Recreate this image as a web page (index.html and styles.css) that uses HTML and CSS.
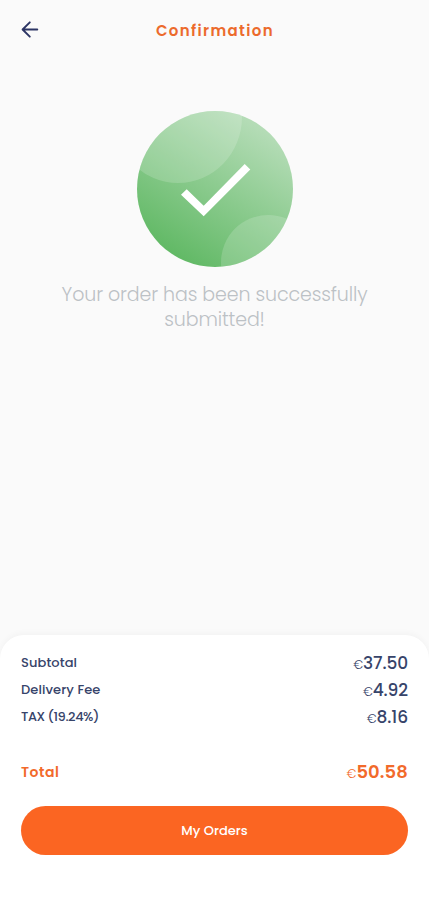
FILE: index.html
```html
<!DOCTYPE html>
<html lang="en">
<head>
<meta charset="utf-8">
<title>Confirmation</title>
<link rel="stylesheet" href="styles.css">
</head>
<body>
<main class="screen">
  <header class="header">
    <svg class="back" viewBox="0 0 20 20" aria-label="Back"><path d="M17.3 9.5H2.8M9.8 2.3L2.6 9.5l7.2 7.2"/></svg>
    <h1 class="title">Confirmation</h1>
  </header>
  <section class="status">
    <svg class="badge" viewBox="0 0 156 156">
      <defs>
        <linearGradient id="green" x1="0.3" y1="1" x2="0.85" y2="0.15">
          <stop offset="0" stop-color="#5fb863"/>
          <stop offset="1" stop-color="#b4dcb6"/>
        </linearGradient>
        <clipPath id="disc"><circle cx="78" cy="78" r="78"/></clipPath>
      </defs>
      <g clip-path="url(#disc)">
        <rect width="156" height="156" fill="url(#green)"/>
        <ellipse cx="41" cy="6" rx="64" ry="66" fill="#fff" fill-opacity=".17"/>
        <circle cx="131.3" cy="151.3" r="47.3" fill="#fff" fill-opacity=".17"/>
      </g>
      <path d="M44 83.7l5.7-5.5 17 16.5L107.7 53l5.6 5.4-46.6 46.9z" fill="#fff"/>
    </svg>
    <p class="message">Your order has been successfully<br>submitted!</p>
  </section>
  <section class="summary">
    <div class="row"><span class="label">Subtotal</span><span class="price"><small>€</small>37.50</span></div>
    <div class="row"><span class="label">Delivery Fee</span><span class="price"><small>€</small>4.92</span></div>
    <div class="row"><span class="label tax">TAX (19.24%)</span><span class="price"><small>€</small>8.16</span></div>
    <div class="row total"><span class="label">Total</span><span class="price"><small>€</small>50.58</span></div>
    <button class="orders" type="button">My Orders</button>
  </section>
</main>
</body>
</html>
```
FILE: styles.css
```css
* { box-sizing: border-box; }
body {
  margin: 0;
  background: #fafafa;
  font-family: Poppins, Inter, sans-serif;
  color: #37446a;
}
.screen {
  display: flex;
  flex-direction: column;
  height: 900px;
  overflow: hidden;
}
.header {
  display: grid;
  grid-template-columns: 20px 1fr 20px;
  align-items: center;
  height: 60px;
  padding: 0 20px;
}
.back {
  width: 20px;
  height: 20px;
  fill: none;
  stroke: #2c3564;
  stroke-width: 1.9;
  stroke-linecap: round;
  stroke-linejoin: round;
}
.title {
  margin: 0 0 0 1px;
  text-align: center;
  font-size: 15px;
  font-weight: 600;
  letter-spacing: 1.35px;
  color: #ec6a2c;
}
.status {
  display: flex;
  flex-direction: column;
  align-items: center;
  flex: 1;
  padding-top: 51px;
}
.badge { width: 156px; height: 156px; }
.message {
  margin: 15px 0 0;
  text-align: center;
  font-size: 19px;
  font-weight: 300;
  line-height: 25px;
  letter-spacing: -.12px;
  color: #bcc1c5;
  white-space: nowrap;
}
.summary {
  height: 265px;
  padding: 14px 21px 0;
  background: #fff;
  border-radius: 24px 24px 0 0;
  box-shadow: 0 -2px 6px rgba(0, 0, 0, .03);
}
.row {
  display: flex;
  align-items: center;
  justify-content: space-between;
  height: 27px;
}
.label { font-size: 13px; font-weight: 500; letter-spacing: .1px; }
.tax { letter-spacing: -.45px; }
.price { font-size: 17px; font-weight: 500; letter-spacing: -.1px; }
.price small { font-size: 12px; font-weight: 300; }
.total { margin-top: 28px; margin-bottom: 21px; color: #f26a2b; }
.total .label { padding-top: 2px; font-size: 14px; font-weight: 600; letter-spacing: .5px; }
.total .price { font-size: 18px; font-weight: 600; letter-spacing: .1px; }
.orders {
  display: block;
  width: 100%;
  height: 49px;
  border: 0;
  border-radius: 25px;
  background: #fb6522;
  color: #fff;
  font: 500 13px Poppins, Inter, sans-serif;
}
```
